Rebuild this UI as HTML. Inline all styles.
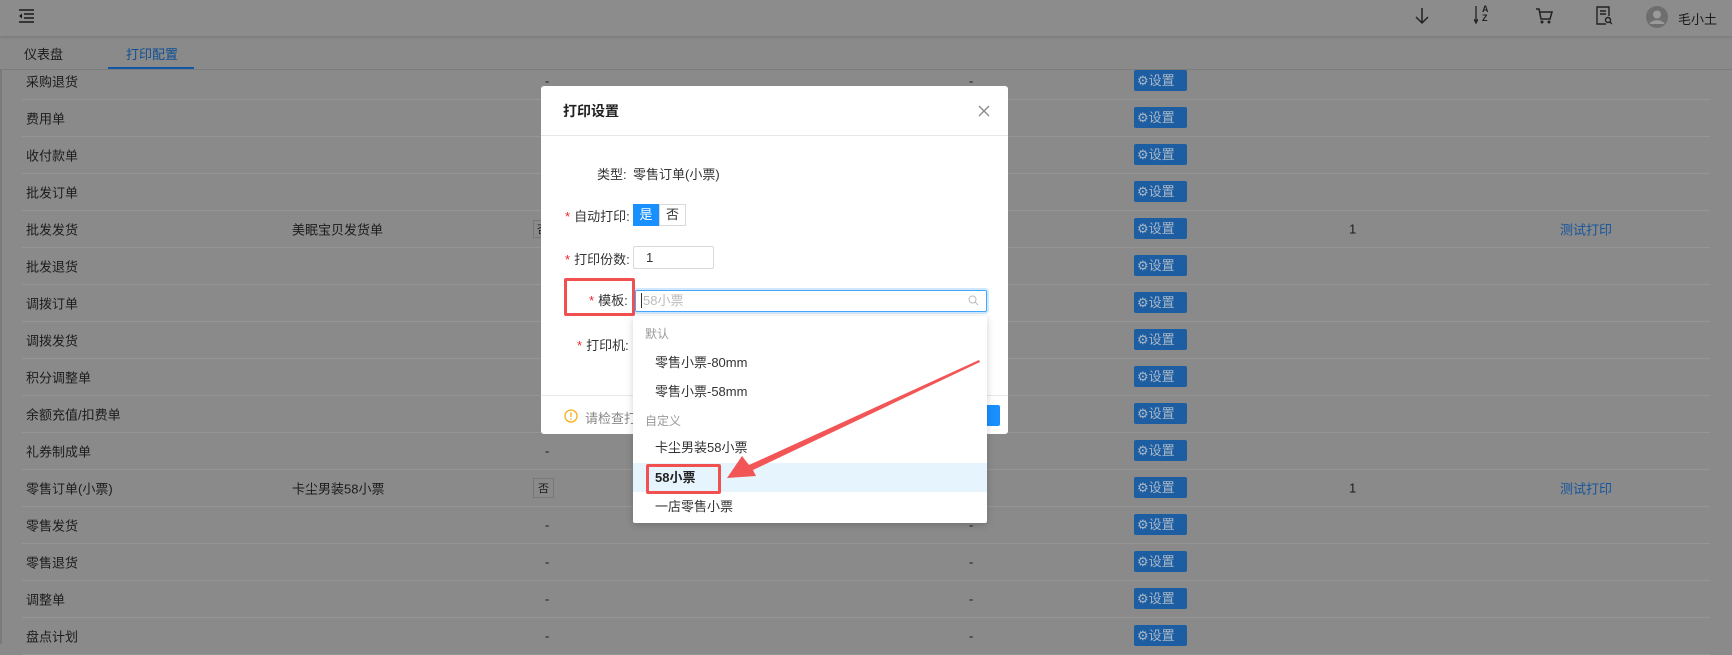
<!DOCTYPE html>
<html style="background:#8a8a8a"><head><meta charset="utf-8"><style>
*{margin:0;padding:0;box-sizing:border-box}
html,body{background:#8a8a8a}
body{width:1732px;height:644px;overflow:hidden;font-family:"Liberation Sans","Noto Sans CJK SC",sans-serif;font-size:13px;color:#1c1c1c;position:relative}
.abs{position:absolute}
.bg{left:0;top:0;width:1732px;height:644px;background:#8a8a8a}
.hdr{left:0;top:0;width:1732px;height:36px;background:#8c8c8c;box-shadow:0 1px 3px rgba(0,0,0,.15)}
.tabs{left:0;top:36px;width:1732px;height:34px;border-bottom:1px solid #7c7c7c}
.row{left:22px;width:1688px;height:37px;border-bottom:1px solid #959595}
.t{position:absolute;top:50%;transform:translateY(-50%);white-space:nowrap}
.btn{position:absolute;left:1112px;top:7px;width:53px;height:21px;background:#1d5ea3;border-radius:2px;color:#a9b6c4;font-size:13px;line-height:21px;padding-left:3px}
.dlg{left:541px;top:86px;width:467px;height:348px;background:#fff;border-radius:3px}
.lbl{position:absolute;font-size:13px;color:#333}
.req{color:#f5222d;margin-right:4px}
.dd{left:633px;top:316px;width:354px;height:207px;background:#fff;box-shadow:0 2px 8px rgba(0,0,0,.18);border-radius:2px}
.grp{position:absolute;left:12px;font-size:12px;color:#999}
.it{position:absolute;left:0;width:354px;height:29px;line-height:29px;padding-left:22px;font-size:13px;color:#333}
</style></head><body>
<div class="abs bg"></div>
<div class="abs hdr">
 <svg class="abs" style="left:19px;top:9px" width="16" height="14" viewBox="0 0 16 14"><path d="M0 1h15M5 5h10M5 9h10M0 13h15" stroke="#1a1a1a" stroke-width="1.5"/><path d="M0 7l3-2.5v5z" fill="#1a1a1a"/></svg>
 <svg class="abs" style="left:1414px;top:7px" width="16" height="18" viewBox="0 0 16 18"><path d="M8 1v15M2 10l6 6 6-6" stroke="#222" stroke-width="1.5" fill="none"/></svg>
 <div class="abs" style="left:1475px;top:5px;font-size:9px;line-height:9px;color:#222;font-weight:bold"><span style="position:absolute;left:7px;top:0">A</span><span style="position:absolute;left:7px;top:9px">Z</span></div>
 <svg class="abs" style="left:1474px;top:6px" width="4" height="18"><path d="M2 0v16M0 13l2 4 2-4" stroke="#222" stroke-width="1.3" fill="none"/></svg>
 <svg class="abs" style="left:1535px;top:7px" width="18" height="18" viewBox="0 0 18 18"><path d="M1 2h3l2 10h9l2-7H5" stroke="#222" stroke-width="1.5" fill="none"/><circle cx="7" cy="15" r="1.5" fill="#222"/><circle cx="14" cy="15" r="1.5" fill="#222"/></svg>
 <svg class="abs" style="left:1596px;top:6px" width="16" height="20" viewBox="0 0 16 20"><path d="M10 18H1V1h12v9M4 5h6M4 8h6" stroke="#222" stroke-width="1.4" fill="none"/><circle cx="12" cy="14" r="2.5" stroke="#222" stroke-width="1.4" fill="none"/><path d="M14 16l2 2" stroke="#222" stroke-width="1.4"/></svg>
 <svg class="abs" style="left:1646px;top:6px" width="22" height="22" viewBox="0 0 22 22"><circle cx="11" cy="11" r="11" fill="#6e6e6e"/><circle cx="11" cy="8.5" r="4" fill="#9a9a9a"/><path d="M3.5 18c2-5 13-5 15 0" fill="#9a9a9a"/></svg>
 <div class="abs" style="left:1678px;top:9px;font-size:13px;color:#1a1a1a">毛小土</div>
</div>
<div class="abs tabs">
 <div class="abs" style="left:24px;top:8px;font-size:13px">仪表盘</div>
 <div class="abs" style="left:126px;top:8px;font-size:13px;color:#0f4f94">打印配置</div>
 <div class="abs" style="left:108px;top:31px;width:86px;height:2px;background:#0f58a6"></div>
</div>
<div class="abs" style="left:0;top:70px;width:2px;height:574px;background:#7a7a7a"></div>

<div class="abs row" style="top:63px"><span class="t" style="left:4px">采购退货</span><span class="t" style="left:523px">-</span><span class="t" style="left:947px">-</span><div class="btn">&#9881;设置</div></div>
<div class="abs row" style="top:100px"><span class="t" style="left:4px">费用单</span><div class="btn">&#9881;设置</div></div>
<div class="abs row" style="top:137px"><span class="t" style="left:4px">收付款单</span><div class="btn">&#9881;设置</div></div>
<div class="abs row" style="top:174px"><span class="t" style="left:4px">批发订单</span><div class="btn">&#9881;设置</div></div>
<div class="abs row" style="top:211px"><span class="t" style="left:4px">批发发货</span><span class="t" style="left:270px">美眠宝贝发货单</span><span class="t" style="left:511px;border:1px solid #777;padding:0 3px;font-size:11px">否</span><div class="btn">&#9881;设置</div><span class="t" style="left:1327px">1</span><span class="t" style="left:1538px;color:#14559c">测试打印</span></div>
<div class="abs row" style="top:248px"><span class="t" style="left:4px">批发退货</span><div class="btn">&#9881;设置</div></div>
<div class="abs row" style="top:285px"><span class="t" style="left:4px">调拨订单</span><div class="btn">&#9881;设置</div></div>
<div class="abs row" style="top:322px"><span class="t" style="left:4px">调拨发货</span><div class="btn">&#9881;设置</div></div>
<div class="abs row" style="top:359px"><span class="t" style="left:4px">积分调整单</span><div class="btn">&#9881;设置</div></div>
<div class="abs row" style="top:396px"><span class="t" style="left:4px">余额充值/扣费单</span><div class="btn">&#9881;设置</div></div>
<div class="abs row" style="top:433px"><span class="t" style="left:4px">礼券制成单</span><span class="t" style="left:523px">-</span><div class="btn">&#9881;设置</div></div>
<div class="abs row" style="top:470px"><span class="t" style="left:4px">零售订单(小票)</span><span class="t" style="left:270px">卡尘男装58小票</span><span class="t" style="left:511px;border:1px solid #777;padding:1px 4px;font-size:11px">否</span><div class="btn">&#9881;设置</div><span class="t" style="left:1327px">1</span><span class="t" style="left:1538px;color:#14559c">测试打印</span></div>
<div class="abs row" style="top:507px"><span class="t" style="left:4px">零售发货</span><span class="t" style="left:523px">-</span><span class="t" style="left:947px">-</span><div class="btn">&#9881;设置</div></div>
<div class="abs row" style="top:544px"><span class="t" style="left:4px">零售退货</span><span class="t" style="left:523px">-</span><span class="t" style="left:947px">-</span><div class="btn">&#9881;设置</div></div>
<div class="abs row" style="top:581px"><span class="t" style="left:4px">调整单</span><span class="t" style="left:523px">-</span><span class="t" style="left:947px">-</span><div class="btn">&#9881;设置</div></div>
<div class="abs row" style="top:618px"><span class="t" style="left:4px">盘点计划</span><span class="t" style="left:523px">-</span><span class="t" style="left:947px">-</span><div class="btn">&#9881;设置</div></div>

<div class="abs dlg">
 <div class="abs" style="left:22px;top:15px;font-size:14px;color:#222;font-weight:bold">打印设置</div>
 <svg class="abs" style="left:437px;top:19px" width="12" height="12"><path d="M1 1l10 10M11 1L1 11" stroke="#888" stroke-width="1.3"/></svg>
 <div class="abs" style="left:0;top:49px;width:467px;height:1px;background:#e8e8e8"></div>
 <div class="lbl" style="left:56px;top:78px">类型:</div><div class="lbl" style="left:92px;top:78px">零售订单(小票)</div>
 <div class="lbl" style="left:24px;top:120px"><span class="req">*</span>自动打印:</div>
 <div class="abs" style="left:92px;top:118px;width:26px;height:22px;background:#1890ff;color:#fff;text-align:center;line-height:22px">是</div>
 <div class="abs" style="left:118px;top:118px;width:27px;height:22px;border:1px solid #d9d9d9;color:#333;text-align:center;line-height:20px">否</div>
 <div class="lbl" style="left:24px;top:163px"><span class="req">*</span>打印份数:</div>
 <div class="abs" style="left:92px;top:160px;width:81px;height:23px;border:1px solid #d9d9d9;border-radius:2px;padding-left:12px;line-height:21px;color:#333">1</div>
 <div class="lbl" style="left:36px;top:249px"><span class="req">*</span>打印机:</div>
 <div class="abs" style="left:94px;top:204px;width:352px;height:22px;border:1px solid #40a9ff;border-radius:2px;box-shadow:0 0 0 2px rgba(24,144,255,.2);padding-left:5px;line-height:20px;color:#bbb"><span style="border-left:1px solid #333;padding-left:1px">58小票</span>
  <svg class="abs" style="right:7px;top:4px" width="11" height="11"><circle cx="4.5" cy="4.5" r="3.5" stroke="#bbb" fill="none"/><path d="M7 7l3 3" stroke="#bbb"/></svg></div>
 <div class="abs" style="left:23px;top:192px;width:71px;height:38px;border:3px solid #f0504f;border-radius:2px"></div>
 <div class="lbl" style="left:48px;top:204px;line-height:22px"><span class="req">*</span>模板:</div>
 <div class="abs" style="left:0;top:309px;width:467px;height:1px;background:#e8e8e8"></div>
 <svg class="abs" style="left:23px;top:323px" width="14" height="14"><circle cx="7" cy="7" r="6" stroke="#faad14" stroke-width="1.3" fill="none"/><path d="M7 3.5v4.5" stroke="#faad14" stroke-width="1.4"/><circle cx="7" cy="10" r=".8" fill="#faad14"/></svg>
 <div class="abs" style="left:44px;top:322px;color:#888">请检查打</div>
 <div class="abs" style="left:440px;top:319px;width:19px;height:21px;background:#1890ff;border-radius:2px"></div>
</div>
<div class="abs dd">
 <div class="grp" style="top:9px">默认</div>
 <div class="it" style="top:32px">零售小票-80mm</div>
 <div class="it" style="top:61px">零售小票-58mm</div>
 <div class="grp" style="top:96px">自定义</div>
 <div class="it" style="top:117px">卡尘男装58小票</div>
 <div class="it" style="top:147px;background:#e6f4fd;font-weight:bold;color:#222;height:29px">58小票</div>
 <div class="it" style="top:176px">一店零售小票</div>
 <div class="abs" style="left:13px;top:148px;width:75px;height:30px;border:3px solid #f0504f;border-radius:2px"></div>
</div>
<svg class="abs" style="left:0;top:0" width="1732" height="644"><polygon points="727,478 742,456 749,465 979,360 980,362 753,470 756,476" fill="#f25555"/></svg>
</body></html>
